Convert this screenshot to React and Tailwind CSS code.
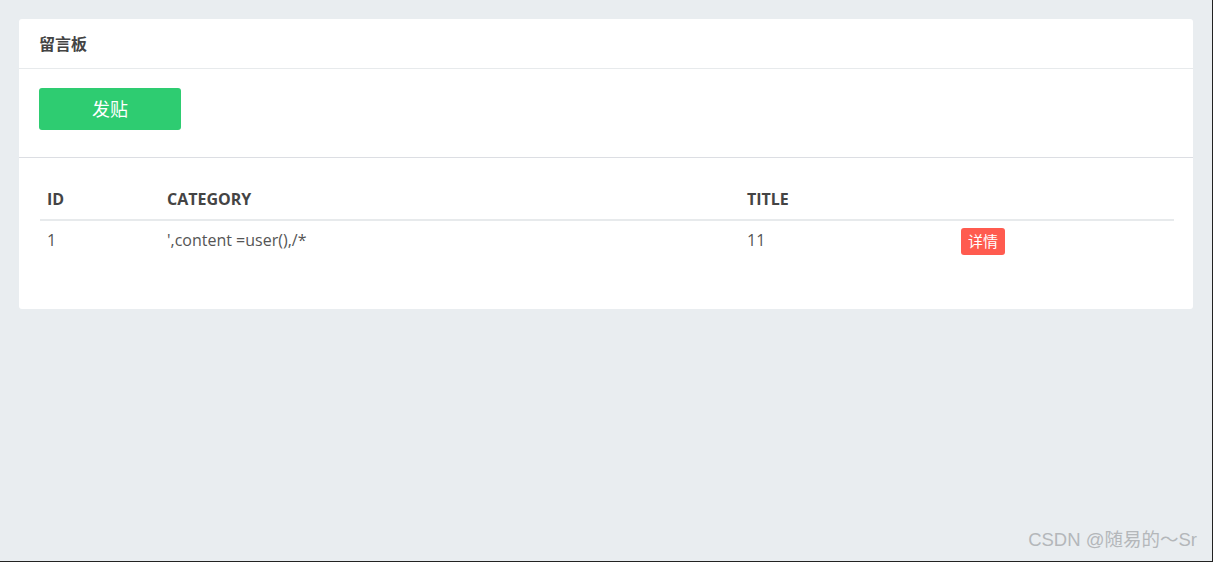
import React from 'react';

const rows = [
    { id: 1, category: "',content =user(),/*", title: '11' },
];

export default function App() {
    return (
        <div
            className="relative h-[562px] w-full overflow-hidden bg-[#e9edf0] border-r border-b border-[#222] pt-[19px] pl-[19px] pr-[19px] text-[#555]"
            style={{ fontFamily: '"Open Sans", "Noto Sans CJK SC", sans-serif' }}
        >
            <div className="w-[1174px] rounded-[3px] bg-white">
                {/* Header */}
                <div className="flex h-[50px] items-center border-b border-[#e7eaec] px-5">
                    <h5 className="text-[16px] font-bold text-[#444]">留言板</h5>
                </div>

                {/* Toolbar */}
                <div className="border-b border-[#dcdee3] px-5 pt-[19px] pb-[27px]">
                    <button className="h-[42px] w-[142px] rounded-[3px] bg-[#2ecc71] text-[18px] text-white">
                        发贴
                    </button>
                </div>

                {/* Table */}
                <div className="pl-[21px] pr-[19px] pt-[21px] pb-[54px]">
                    <table className="w-full table-fixed border-collapse text-[16px]">
                        <thead>
                            <tr className="border-b-2 border-[#e7eaec] text-left text-[#444]">
                                <th className="w-[120px] px-[7px] py-[8px] font-bold">ID</th>
                                <th className="w-[580px] px-[7px] py-[8px] font-bold">CATEGORY</th>
                                <th className="w-[221px] px-[7px] py-[8px] font-bold">TITLE</th>
                                <th className="px-0 py-[8px]"></th>
                            </tr>
                        </thead>
                        <tbody>
                            {rows.map((r) => (
                                <tr key={r.id} className="align-top">
                                    <td className="px-[7px] pt-[7px]">{r.id}</td>
                                    <td className="px-[7px] pt-[7px]">{r.category}</td>
                                    <td className="px-[7px] pt-[7px]">{r.title}</td>
                                    <td className="px-0 pt-[7px]">
                                        <span className="inline-flex h-[27px] w-[44px] items-center justify-center rounded-[3px] bg-[#ff5b4f] text-[15px] text-white">
                                            详情
                                        </span>
                                    </td>
                                </tr>
                            ))}
                        </tbody>
                    </table>
                </div>
            </div>

            {/* watermark */}
            <div
                className="absolute bottom-[7px] right-[15px] text-[18.5px] text-[#b4b7ba]"
                style={{ fontFamily: '"Liberation Sans", "Noto Sans CJK SC", sans-serif' }}
            >
                CSDN @随易的～Sr
            </div>
        </div>
    );
}
